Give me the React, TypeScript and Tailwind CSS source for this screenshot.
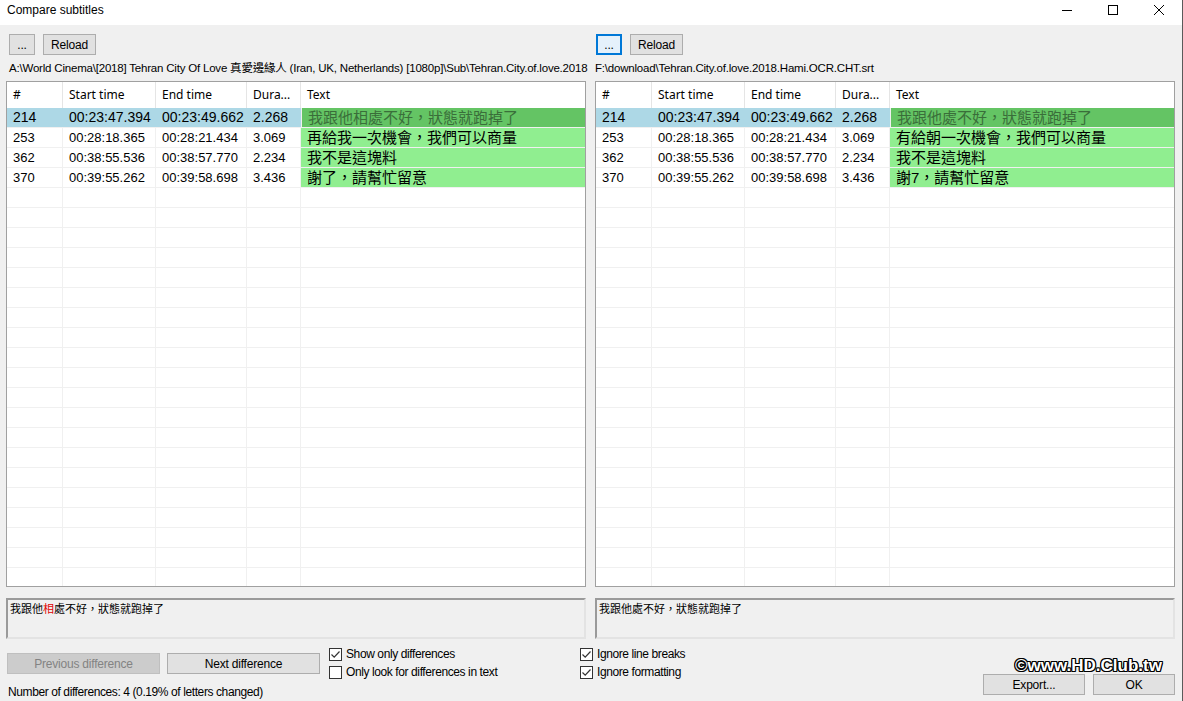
import React from "react";

type Row = {
  id: number;
  start: string;
  end: string;
  dur: string;
  text: string;
  selected?: boolean;
};

const leftRows: Row[] = [
  { id: 214, start: "00:23:47.394", end: "00:23:49.662", dur: "2.268", text: "我跟他相處不好，狀態就跑掉了", selected: true },
  { id: 253, start: "00:28:18.365", end: "00:28:21.434", dur: "3.069", text: "再給我一次機會，我們可以商量" },
  { id: 362, start: "00:38:55.536", end: "00:38:57.770", dur: "2.234", text: "我不是這塊料" },
  { id: 370, start: "00:39:55.262", end: "00:39:58.698", dur: "3.436", text: "謝了，請幫忙留意" },
];

const rightRows: Row[] = [
  { id: 214, start: "00:23:47.394", end: "00:23:49.662", dur: "2.268", text: "我跟他處不好，狀態就跑掉了", selected: true },
  { id: 253, start: "00:28:18.365", end: "00:28:21.434", dur: "3.069", text: "有給朝一次機會，我們可以商量" },
  { id: 362, start: "00:38:55.536", end: "00:38:57.770", dur: "2.234", text: "我不是這塊料" },
  { id: 370, start: "00:39:55.262", end: "00:39:58.698", dur: "3.436", text: "謝7，請幫忙留意" },
];

const WinButton: React.FC<{ label: string; className?: string; disabled?: boolean; focused?: boolean }> = ({
  label,
  className = "",
  disabled,
  focused,
}) => (
  <div
    className={`flex items-center justify-center h-[21px] text-[12px] tracking-[-0.2px] leading-none ${
      disabled
        ? "bg-[#cccccc] border border-[#bfbfbf] text-[#838383]"
        : focused
        ? "bg-[#e5f1fb] border-2 border-[#0078d7] text-black"
        : "bg-[#e1e1e1] border border-[#adadad] text-black"
    } ${className}`}
  >
    {label}
  </div>
);

const CheckBox: React.FC<{ checked?: boolean; label: string }> = ({ checked, label }) => (
  <div className="flex items-center h-[18px] gap-[4px]">
    <div className="w-[13px] h-[13px] bg-white border border-[#333333] flex items-center justify-center">
      {checked && (
        <svg width="11" height="11" viewBox="0 0 11 11">
          <path d="M1.5 5.5 L4.2 8.2 L9.5 2.5" fill="none" stroke="#333" strokeWidth="1.2" />
        </svg>
      )}
    </div>
    <span className="text-[12px] tracking-[-0.4px] text-black">{label}</span>
  </div>
);

const SubGrid: React.FC<{ rows: Row[] }> = ({ rows }) => {
  const blanks = Array.from({ length: 21 });
  return (
    <div className="h-[506px] border border-[#a0a0a0] bg-white overflow-hidden">
      <div className="flex h-[26px] text-[12px] text-black font-['Noto_Sans',sans-serif]">
        <div className="w-[56px] px-[6px] flex items-center border-r border-[#e5e5e5]">#</div>
        <div className="w-[93px] px-[6px] flex items-center border-r border-[#e5e5e5]">Start time</div>
        <div className="w-[91px] px-[6px] flex items-center border-r border-[#e5e5e5]">End time</div>
        <div className="w-[54px] px-[6px] flex items-center border-r border-[#e5e5e5]">Dura...</div>
        <div className="flex-1 px-[6px] flex items-center">Text</div>
      </div>
      {rows.map((r) =>
        r.selected ? (
          <div key={r.id} className="flex h-[20px] border-b border-[#f0f0f0] bg-[#add8e6] text-[14px] leading-[19px] text-black">
            <div className="w-[56px] px-[6px]">{r.id}</div>
            <div className="w-[93px] px-[6px] whitespace-nowrap">{r.start}</div>
            <div className="w-[91px] px-[6px] whitespace-nowrap">{r.end}</div>
            <div className="w-[54px] px-[6px]">{r.dur}</div>
            <div className="flex-1 px-[6px] bg-[#64c464] text-[#3a6e3a] text-[15px] whitespace-nowrap border-l border-[#f0f0f0]">
              {r.text}
            </div>
          </div>
        ) : (
          <div key={r.id} className="flex h-[20px] border-b border-[#f0f0f0] text-[13px] leading-[19px] text-black">
            <div className="w-[56px] px-[6px] border-r border-[#f0f0f0]">{r.id}</div>
            <div className="w-[93px] px-[6px] border-r border-[#f0f0f0]">{r.start}</div>
            <div className="w-[91px] px-[6px] border-r border-[#f0f0f0]">{r.end}</div>
            <div className="w-[54px] px-[6px] border-r border-[#f0f0f0]">{r.dur}</div>
            <div className="flex-1 px-[6px] bg-[#90ee90] text-[15px] whitespace-nowrap">{r.text}</div>
          </div>
        )
      )}
      {blanks.map((_, i) => (
        <div key={i} className="flex h-[20px] border-b border-[#f0f0f0]">
          <div className="w-[56px] border-r border-[#f0f0f0]" />
          <div className="w-[93px] border-r border-[#f0f0f0]" />
          <div className="w-[91px] border-r border-[#f0f0f0]" />
          <div className="w-[54px] border-r border-[#f0f0f0]" />
          <div className="flex-1" />
        </div>
      ))}
    </div>
  );
};

const Side: React.FC<{ path: string; rows: Row[]; preview: React.ReactNode; focused?: boolean; pathClass: string }> = ({
  path,
  rows,
  preview,
  focused,
  pathClass,
}) => (
  <div className="w-[580px] flex flex-col">
    <div className="flex gap-[8px] mt-[9px] pl-[3px]">
      {focused ? (
        <WinButton label="..." focused className="w-[26px] ml-[-2px]" />
      ) : (
        <WinButton label="..." className="w-[26px]" />
      )}
      <WinButton label="Reload" className="w-[53px]" />
    </div>
    <div className={`mt-[6px] h-[14px] text-[11.5px] tracking-[-0.2px] leading-[14px] text-black whitespace-nowrap ${pathClass}`}>
      {path}
    </div>
    <div className="mt-[6px]">
      <SubGrid rows={rows} />
    </div>
    <div className="mt-[11px] h-[41px] border-2 border-t-[#9a9a9a] border-l-[#9a9a9a] border-r-[#e3e3e3] border-b-[#e3e3e3] px-[2px] pt-[1px] text-[11px] leading-[16px] text-black whitespace-nowrap">
      {preview}
    </div>
  </div>
);

export default function App() {
  return (
    <div className="w-[1183px] h-[701px] bg-[#f0f0f0] flex flex-col relative overflow-hidden border-r border-[#5a5a5a] font-['Liberation_Sans','Noto_Sans_CJK_TC',sans-serif]">
      {/* title bar */}
      <div className="h-[25px] bg-white flex items-start shrink-0">
        <span className="pl-[7px] pt-[3px] text-[12px] leading-[14px] text-black">Compare subtitles</span>
        <div className="ml-auto flex items-center">
          <div className="w-[46px] h-[19px] flex items-center justify-center">
            <svg width="10" height="10" viewBox="0 0 10 10">
              <path d="M0 5.5 H10" stroke="#000" strokeWidth="1" />
            </svg>
          </div>
          <div className="w-[46px] h-[19px] flex items-center justify-center">
            <svg width="10" height="10" viewBox="0 0 10 10">
              <rect x="0.5" y="0.5" width="9" height="9" fill="none" stroke="#000" strokeWidth="1" />
            </svg>
          </div>
          <div className="w-[46px] h-[19px] flex items-center justify-center">
            <svg width="10" height="10" viewBox="0 0 10 10">
              <path d="M0 0 L10 10 M10 0 L0 10" stroke="#000" strokeWidth="1" />
            </svg>
          </div>
        </div>
      </div>

      {/* panels */}
      <div className="flex gap-[9px] pl-[6px]">
        <Side
          path="A:\World Cinema\[2018] Tehran City Of Love 真愛邊緣人 (Iran, UK, Netherlands) [1080p]\Sub\Tehran.City.of.love.2018"
          rows={leftRows}
          pathClass="pl-[3px] w-[588px]"
          preview={
            <span>
              我跟他<span className="text-[#e00000]">相</span>處不好，狀態就跑掉了
            </span>
          }
        />
        <Side
          path="F:\download\Tehran.City.of.love.2018.Hami.OCR.CHT.srt"
          rows={rightRows}
          pathClass="pl-0"
          focused
          preview={<span>我跟他處不好，狀態就跑掉了</span>}
        />
      </div>

      {/* bottom controls */}
      <div className="flex flex-1 pl-[7px] pr-[7px]">
        <div className="flex flex-col w-[313px]">
          <div className="flex gap-[7px] mt-[14px]">
            <WinButton label="Previous difference" disabled className="w-[153px]" />
            <WinButton label="Next difference" className="w-[153px]" />
          </div>
          <div className="mt-[9px] ml-[1px] text-[12px] tracking-[-0.4px] text-black whitespace-nowrap">
            Number of differences: 4 (0.19% of letters changed)
          </div>
        </div>
        <div className="flex flex-col ml-[9px] mt-[6px] w-[251px]">
          <CheckBox checked label="Show only differences" />
          <CheckBox label="Only look for differences in text" />
        </div>
        <div className="flex flex-col mt-[6px]">
          <CheckBox checked label="Ignore line breaks" />
          <CheckBox checked label="Ignore formatting" />
        </div>
        <div className="ml-auto flex items-end gap-[8px] pb-[6px]">
          <WinButton label="Export..." className="w-[102px]" />
          <WinButton label="OK" className="w-[82px]" />
        </div>
      </div>

      <div className="absolute left-[1015px] top-[656px] text-[17px] leading-[20px] font-bold text-white font-['Liberation_Sans',sans-serif] [text-shadow:1px_1px_0_#000,-1px_-1px_0_#000,1px_-1px_0_#000,-1px_1px_0_#000,0_1px_0_#000,1px_0_0_#000,0_-1px_0_#000,-1px_0_0_#000]">
        ©www.HD.Club.tw
      </div>
    </div>
  );
}
